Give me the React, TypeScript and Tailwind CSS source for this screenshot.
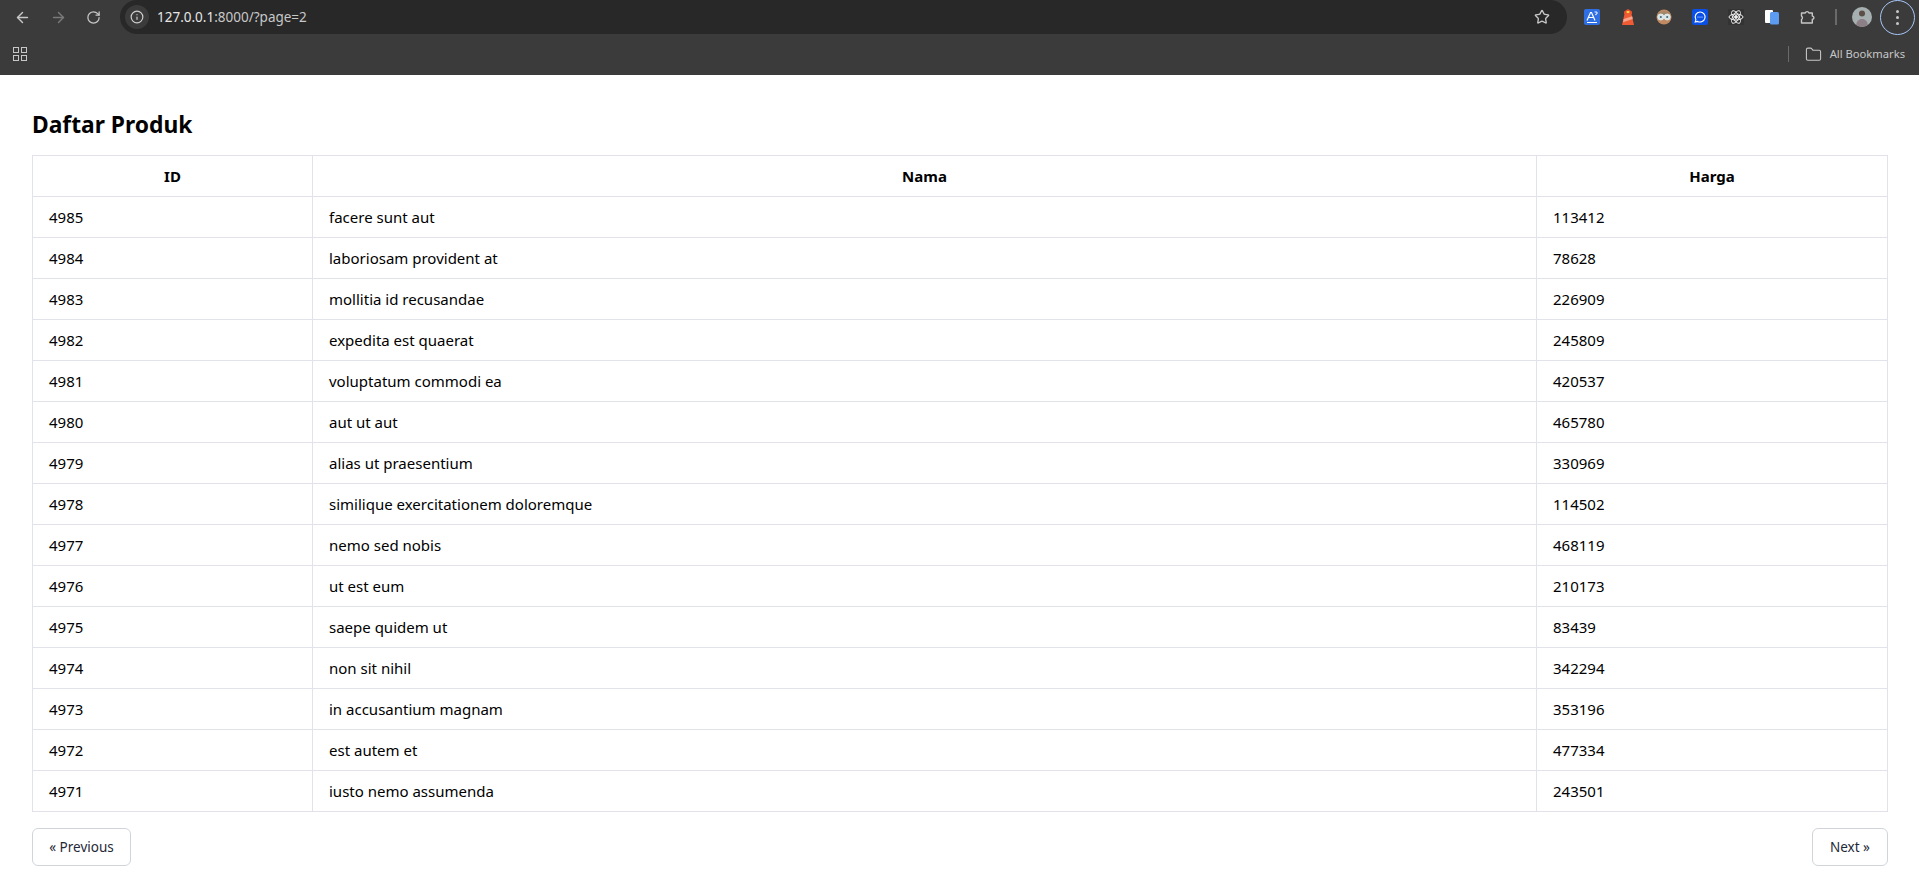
import { ArrowLeft, ArrowRight, RotateCw, Info, Star, Folder } from "lucide-react";

const rows: [number, string, number][] = [
  [4985, "facere sunt aut", 113412],
  [4984, "laboriosam provident at", 78628],
  [4983, "mollitia id recusandae", 226909],
  [4982, "expedita est quaerat", 245809],
  [4981, "voluptatum commodi ea", 420537],
  [4980, "aut ut aut", 465780],
  [4979, "alias ut praesentium", 330969],
  [4978, "similique exercitationem doloremque", 114502],
  [4977, "nemo sed nobis", 468119],
  [4976, "ut est eum", 210173],
  [4975, "saepe quidem ut", 83439],
  [4974, "non sit nihil", 342294],
  [4973, "in accusantium magnam", 353196],
  [4972, "est autem et", 477334],
  [4971, "iusto nemo assumenda", 243501],
];

function Exts() {
  return (
    <div className="flex items-center gap-[20px]">
      <svg width="16" height="16" viewBox="0 0 16 16">
        <rect width="16" height="16" rx="2" fill="#2f6fe4" />
        <path d="M3 11.5 6.5 3.5h1L11 11.5M4.5 8.5h5M3 13.5h10" stroke="#fff" strokeWidth="1.2" fill="none" />
        <path d="M10.5 3h2.5v2h-1.2v1.2" stroke="#fff" strokeWidth="0.9" fill="none" />
      </svg>
      <svg width="16" height="18" viewBox="0 0 16 18">
        <path d="M4.5 6h7L14 17H2z" fill="#ef5b35" />
        <path d="M3.6 11 12.2 8.3l.6 2.7-9.8 3.2z" fill="#f9a48a" />
        <path d="M4 6V3.5L8 1l4 2.5V6z" fill="#e94e2e" />
        <rect x="6.6" y="3" width="2.8" height="2.2" fill="#ffd23f" />
      </svg>
      <svg width="16" height="16" viewBox="0 0 16 16">
        <circle cx="8" cy="8" r="7.5" fill="#c08a62" />
        <path d="M1 6a7.5 6 0 0 1 14 0z" fill="#a3876a" />
        <circle cx="4.8" cy="8" r="3" fill="#cfe6ea" stroke="#e8e8e8" />
        <circle cx="11.2" cy="8" r="3" fill="#cfe6ea" stroke="#e8e8e8" />
        <circle cx="4.8" cy="8" r="1" fill="#47626b" />
        <circle cx="11.2" cy="8" r="1" fill="#47626b" />
      </svg>
      <svg width="16" height="16" viewBox="0 0 16 16">
        <rect width="16" height="16" rx="2" fill="#0b50e6" />
        <path d="M8 3a5 5 0 1 1-2.3 9.4L3.2 13l.7-2.4A5 5 0 0 1 8 3z" fill="none" stroke="#fff" strokeWidth="1.1" />
        <circle cx="6" cy="8" r=".6" fill="#fff" />
        <circle cx="8" cy="8" r=".6" fill="#fff" />
        <circle cx="10" cy="8" r=".6" fill="#fff" />
      </svg>
      <svg width="16" height="16" viewBox="0 0 16 16" fill="none" stroke="#eee" strokeWidth="1">
        <rect width="16" height="16" fill="#333" stroke="none" />
        <ellipse cx="8" cy="8" rx="7" ry="3" />
        <ellipse cx="8" cy="8" rx="7" ry="3" transform="rotate(60 8 8)" />
        <ellipse cx="8" cy="8" rx="7" ry="3" transform="rotate(120 8 8)" />
        <circle cx="8" cy="8" r="1.4" fill="#eee" />
      </svg>
      <svg width="16" height="16" viewBox="0 0 16 16">
        <rect x="1" y="1" width="8" height="13" rx="1" fill="#fff" />
        <rect x="6" y="3" width="9" height="12.5" rx="1.5" fill="#5c9bf0" />
      </svg>
      <svg width="16" height="16" viewBox="0 0 16 16" fill="none" stroke="#c7c7c7" strokeWidth="1.4" strokeLinejoin="round">
        <path d="M1.5 4h3.7a2 2 0 0 1 3.8 0h3.3v3.1a1.6 1.6 0 0 1 0 3.2V14H1.5v-3.5a2 2 0 0 0 0-3.4z" />
      </svg>
    </div>
  );
}

function Chrome() {
  return (
    <header className="bg-[#3b3b3b] text-[#c7c7c7]">
      <div className="flex h-[34px] items-center">
        <div className="flex w-[120px] items-center gap-[19px] pl-[14px]">
          <ArrowLeft size={17} className="text-[#c7c7c7]" />
          <ArrowRight size={17} className="text-[#7a7a7a]" />
          <RotateCw size={15} className="text-[#c7c7c7]" />
        </div>
        <div className="flex h-[34px] w-[1447px] items-center rounded-full bg-[#282828] pr-[17px]">
          <div className="ml-[5px] flex h-[24px] w-[24px] items-center justify-center rounded-full bg-[#3b3b3b]">
            <Info size={14} className="text-[#d0d0d0]" />
          </div>
          <span className="ml-[8px] text-[13.5px] text-[#c7c7c7]">
            <span className="text-[#e6e6e6]">127.0.0.1</span>:8000/?page=2
          </span>
          <Star size={16} className="ml-auto text-[#c7c7c7]" />
        </div>
        <div className="ml-[17px]"><Exts /></div>
        <div className="ml-[19px] h-[16px] w-[2px] bg-[#6a6a6a]" />
        <div className="ml-[15px] flex h-[20px] w-[20px] items-center justify-center overflow-hidden rounded-full bg-[#a7b0b0]">
          <svg width="20" height="20" viewBox="0 0 20 20">
            <circle cx="10" cy="6.5" r="3" fill="#5b4f48" />
            <path d="M4 20c0-6 3-8 6-8s6 2 6 8z" fill="#8c7f85" />
          </svg>
        </div>
        <div className="ml-[8px] flex h-[35px] w-[35px] shrink-0 items-center justify-center rounded-full border border-[#a8c7fa]">
          <div className="flex flex-col gap-[3px]">
            <i className="h-[3px] w-[3px] rounded-full bg-[#c7c7c7]" />
            <i className="h-[3px] w-[3px] rounded-full bg-[#c7c7c7]" />
            <i className="h-[3px] w-[3px] rounded-full bg-[#c7c7c7]" />
          </div>
        </div>
      </div>
      <div className="flex h-[41px] items-center justify-between pb-px text-[11.2px]">
        <div className="ml-[13px] grid grid-cols-2 gap-[2px]">
          <i className="h-[6px] w-[6px] border border-[#c7c7c7]" />
          <i className="h-[6px] w-[6px] border border-[#c7c7c7]" />
          <i className="h-[6px] w-[6px] border border-[#c7c7c7]" />
          <i className="h-[6px] w-[6px] border border-[#c7c7c7]" />
        </div>
        <div className="mr-[14px] flex items-center">
          <div className="mr-[16px] h-[16px] w-px bg-[#6a6a6a]" />
          <Folder size={17} strokeWidth={1.5} className="mr-[8px]" />
          <span>All Bookmarks</span>
        </div>
      </div>
    </header>
  );
}

export default function App() {
  const th = "border border-[#e2e2ea] px-4 h-[41px] text-center font-bold";
  const td = "border border-[#e2e2ea] px-4 h-[41px]";
  return (
    <div className="min-h-[891px] overflow-hidden bg-white text-black" style={{ fontFamily: '"Noto Sans", sans-serif' }}>
      <Chrome />
      <main className="pl-8 pr-[31px] pt-[34px]">
        <h1 className="mb-[14px] text-[22.8px] leading-[32px] font-bold">Daftar Produk</h1>
        <table className="w-full table-fixed border-collapse text-[15px]">
          <colgroup>
            <col className="w-[280px]" />
            <col />
            <col className="w-[351px]" />
          </colgroup>
          <thead>
            <tr>
              <th className={th}>ID</th>
              <th className={th}>Nama</th>
              <th className={th}>Harga</th>
            </tr>
          </thead>
          <tbody>
            {rows.map((r) => (
              <tr key={r[0]}>
                <td className={td}>{r[0]}</td>
                <td className={td}>{r[1]}</td>
                <td className={td}>{r[2]}</td>
              </tr>
            ))}
          </tbody>
        </table>
        <div className="mt-4 flex justify-between">
          <a className="flex h-[38px] w-[99px] items-center justify-center rounded-md border border-[#d1d5db] text-[13.5px] text-[#1f2937]">« Previous</a>
          <a className="flex h-[38px] w-[76px] items-center justify-center rounded-md border border-[#d1d5db] text-[13.5px] text-[#1f2937]">Next »</a>
        </div>
      </main>
    </div>
  );
}
